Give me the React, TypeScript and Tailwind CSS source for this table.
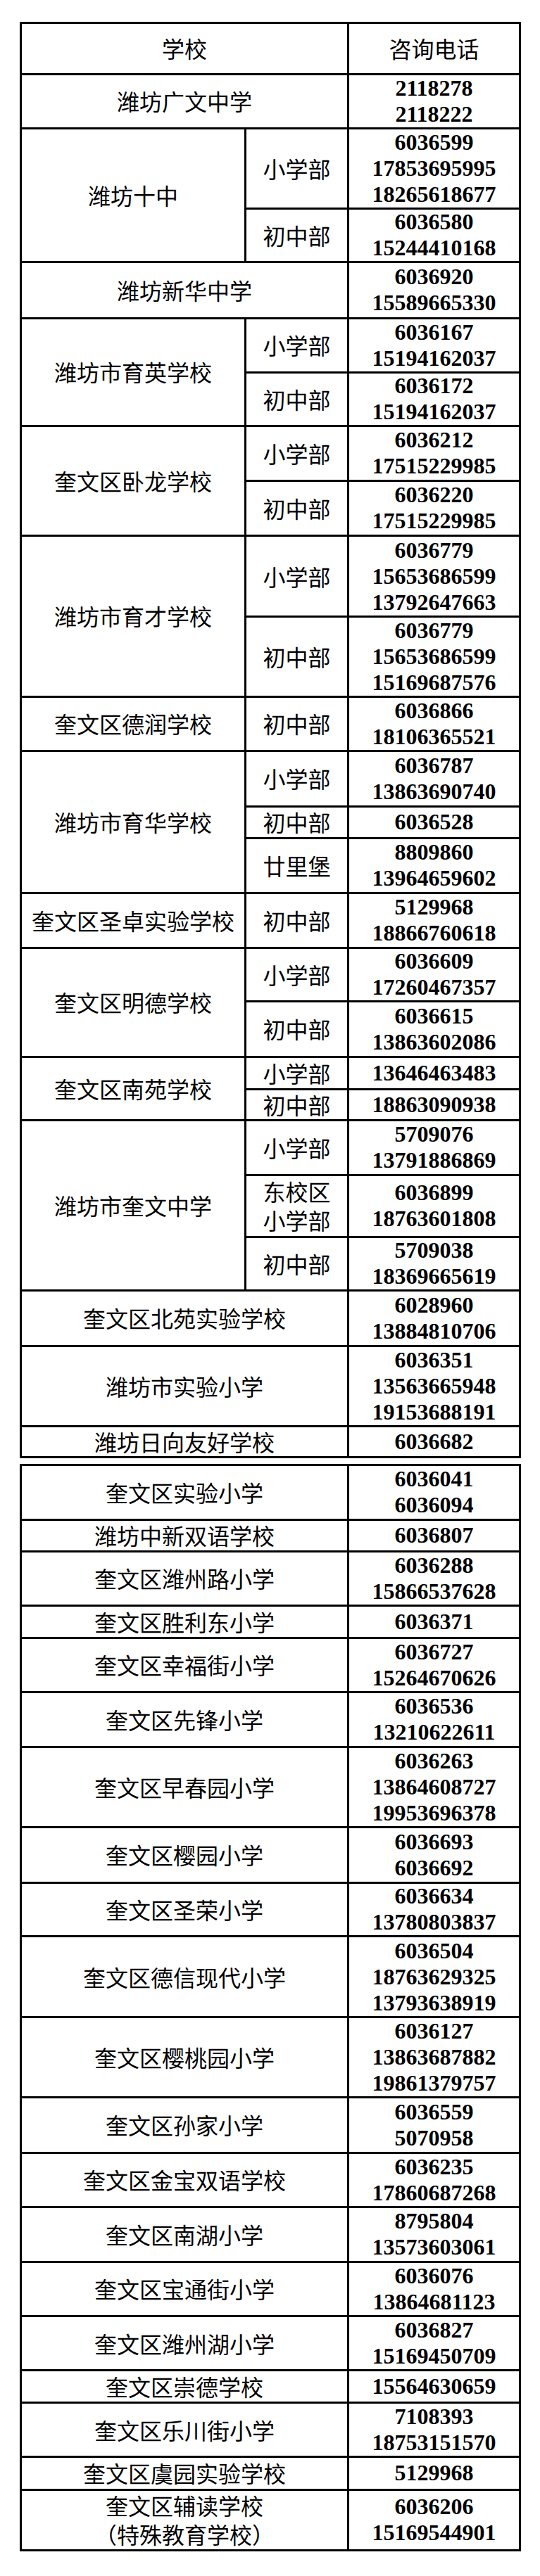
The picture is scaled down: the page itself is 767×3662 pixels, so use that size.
import React from "react";

type Sub = { d: string[]; p: string[]; h: string };
type Block =
  | { kind: "span"; name: string[]; p: string[]; h: string }
  | { kind: "split"; name: string[]; subs: Sub[] };

const table1: Block[] = [
  { kind: "span", name: ["潍坊广文中学"], p: ["2118278", "2118222"], h: "h-[77px]" },
  {
    kind: "split",
    name: ["潍坊十中"],
    subs: [
      { d: ["小学部"], p: ["6036599", "17853695995", "18265618677"], h: "h-[114px]" },
      { d: ["初中部"], p: ["6036580", "15244410168"], h: "h-[76px]" },
    ],
  },
  { kind: "span", name: ["潍坊新华中学"], p: ["6036920", "15589665330"], h: "h-[80px]" },
  {
    kind: "split",
    name: ["潍坊市育英学校"],
    subs: [
      { d: ["小学部"], p: ["6036167", "15194162037"], h: "h-[77px]" },
      { d: ["初中部"], p: ["6036172", "15194162037"], h: "h-[76px]" },
    ],
  },
  {
    kind: "split",
    name: ["奎文区卧龙学校"],
    subs: [
      { d: ["小学部"], p: ["6036212", "17515229985"], h: "h-[78px]" },
      { d: ["初中部"], p: ["6036220", "17515229985"], h: "h-[78.5px]" },
    ],
  },
  {
    kind: "split",
    name: ["潍坊市育才学校"],
    subs: [
      { d: ["小学部"], p: ["6036779", "15653686599", "13792647663"], h: "h-[115px]" },
      { d: ["初中部"], p: ["6036779", "15653686599", "15169687576"], h: "h-[113.5px]" },
    ],
  },
  {
    kind: "split",
    name: ["奎文区德润学校"],
    subs: [{ d: ["初中部"], p: ["6036866", "18106365521"], h: "h-[77px]" }],
  },
  {
    kind: "split",
    name: ["潍坊市育华学校"],
    subs: [
      { d: ["小学部"], p: ["6036787", "13863690740"], h: "h-[79px]" },
      { d: ["初中部"], p: ["6036528"], h: "h-[45px]" },
      { d: ["廿里堡"], p: ["8809860", "13964659602"], h: "h-[78px]" },
    ],
  },
  {
    kind: "split",
    name: ["奎文区圣卓实验学校"],
    subs: [{ d: ["初中部"], p: ["5129968", "18866760618"], h: "h-[78px]" }],
  },
  {
    kind: "split",
    name: ["奎文区明德学校"],
    subs: [
      { d: ["小学部"], p: ["6036609", "17260467357"], h: "h-[76.5px]" },
      { d: ["初中部"], p: ["6036615", "13863602086"], h: "h-[78.5px]" },
    ],
  },
  {
    kind: "split",
    name: ["奎文区南苑学校"],
    subs: [
      { d: ["小学部"], p: ["13646463483"], h: "h-[46px]" },
      { d: ["初中部"], p: ["18863090938"], h: "h-[44px]" },
    ],
  },
  {
    kind: "split",
    name: ["潍坊市奎文中学"],
    subs: [
      { d: ["小学部"], p: ["5709076", "13791886869"], h: "h-[78.5px]" },
      { d: ["东校区", "小学部"], p: ["6036899", "18763601808"], h: "h-[87.5px]" },
      { d: ["初中部"], p: ["5709038", "18369665619"], h: "h-[76.5px]" },
    ],
  },
  { kind: "span", name: ["奎文区北苑实验学校"], p: ["6028960", "13884810706"], h: "h-[78.5px]" },
  { kind: "span", name: ["潍坊市实验小学"], p: ["6036351", "13563665948", "19153688191"], h: "h-[114px]" },
  { kind: "span", name: ["潍坊日向友好学校"], p: ["6036682"], h: "h-[44px]" },
];

const table2: Block[] = [
  { kind: "span", name: ["奎文区实验小学"], p: ["6036041", "6036094"], h: "h-[77.5px]" },
  { kind: "span", name: ["潍坊中新双语学校"], p: ["6036807"], h: "h-[45px]" },
  { kind: "span", name: ["奎文区潍州路小学"], p: ["6036288", "15866537628"], h: "h-[77.5px]" },
  { kind: "span", name: ["奎文区胜利东小学"], p: ["6036371"], h: "h-[46px]" },
  { kind: "span", name: ["奎文区幸福街小学"], p: ["6036727", "15264670626"], h: "h-[76.5px]" },
  { kind: "span", name: ["奎文区先锋小学"], p: ["6036536", "13210622611"], h: "h-[78px]" },
  { kind: "span", name: ["奎文区早春园小学"], p: ["6036263", "13864608727", "19953696378"], h: "h-[114.5px]" },
  { kind: "span", name: ["奎文区樱园小学"], p: ["6036693", "6036692"], h: "h-[78.5px]" },
  { kind: "span", name: ["奎文区圣荣小学"], p: ["6036634", "13780803837"], h: "h-[76.5px]" },
  { kind: "span", name: ["奎文区德信现代小学"], p: ["6036504", "18763629325", "13793638919"], h: "h-[115px]" },
  { kind: "span", name: ["奎文区樱桃园小学"], p: ["6036127", "13863687882", "19861379757"], h: "h-[114px]" },
  { kind: "span", name: ["奎文区孙家小学"], p: ["6036559", "5070958"], h: "h-[78.5px]" },
  { kind: "span", name: ["奎文区金宝双语学校"], p: ["6036235", "17860687268"], h: "h-[77.5px]" },
  { kind: "span", name: ["奎文区南湖小学"], p: ["8795804", "13573603061"], h: "h-[77.5px]" },
  { kind: "span", name: ["奎文区宝通街小学"], p: ["6036076", "13864681123"], h: "h-[77.5px]" },
  { kind: "span", name: ["奎文区潍州湖小学"], p: ["6036827", "15169450709"], h: "h-[77px]" },
  { kind: "span", name: ["奎文区崇德学校"], p: ["15564630659"], h: "h-[46px]" },
  { kind: "span", name: ["奎文区乐川街小学"], p: ["7108393", "18753151570"], h: "h-[77px]" },
  { kind: "span", name: ["奎文区虞园实验学校"], p: ["5129968"], h: "h-[46.5px]" },
  { kind: "span", name: ["奎文区辅读学校", "（特殊教育学校）"], p: ["6036206", "15169544901"], h: "h-[86px]" },
];

function CnText({ lines }: { lines: string[] }) {
  return (
    <div className="flex flex-col items-center font-['Noto_Sans_CJK_SC',sans-serif] text-[32px] leading-[41px] text-black whitespace-nowrap">
      {lines.map((l, i) => (
        <span key={i}>{l}</span>
      ))}
    </div>
  );
}

function Phones({ lines }: { lines: string[] }) {
  return (
    <div className="flex flex-col items-center font-['Liberation_Serif',serif] font-bold text-[32px] leading-[37px] text-black whitespace-nowrap">
      {lines.map((l, i) => (
        <span key={i}>{l}</span>
      ))}
    </div>
  );
}

function BlockView({ b }: { b: Block }) {
  if (b.kind === "span") {
    return (
      <div className={`flex border-b-[3px] border-black ${b.h}`}>
        <div className="w-[465px] shrink-0 border-r-[3px] border-black flex items-center justify-center">
          <CnText lines={b.name} />
        </div>
        <div className="flex-1 flex items-center justify-center">
          <Phones lines={b.p} />
        </div>
      </div>
    );
  }
  return (
    <div className="flex">
      <div className="w-[319px] shrink-0 border-r-[3px] border-b-[3px] border-black flex items-center justify-center">
        <CnText lines={b.name} />
      </div>
      <div className="flex-1 flex flex-col">
        {b.subs.map((s, i) => (
          <div key={i} className={`flex border-b-[3px] border-black ${s.h}`}>
            <div className="w-[146px] shrink-0 border-r-[3px] border-black flex items-center justify-center">
              <CnText lines={s.d} />
            </div>
            <div className="flex-1 flex items-center justify-center">
              <Phones lines={s.p} />
            </div>
          </div>
        ))}
      </div>
    </div>
  );
}

export default function App() {
  return (
    <div className="bg-white min-h-[3662px] pt-[31px] pl-[28px]">
      <div className="w-[712px] border-x-[3px] border-t-[3px] border-black">
        <div className="flex h-[72.5px] border-b-[3px] border-black">
          <div className="w-[465px] shrink-0 border-r-[3px] border-black flex items-center justify-center">
            <CnText lines={["学校"]} />
          </div>
          <div className="flex-1 flex items-center justify-center">
            <CnText lines={["咨询电话"]} />
          </div>
        </div>
        {table1.map((b, i) => (
          <BlockView key={i} b={b} />
        ))}
      </div>
      <div className="mt-[8.5px] w-[712px] border-x-[3px] border-t-[3px] border-black">
        {table2.map((b, i) => (
          <BlockView key={i} b={b} />
        ))}
      </div>
    </div>
  );
}
